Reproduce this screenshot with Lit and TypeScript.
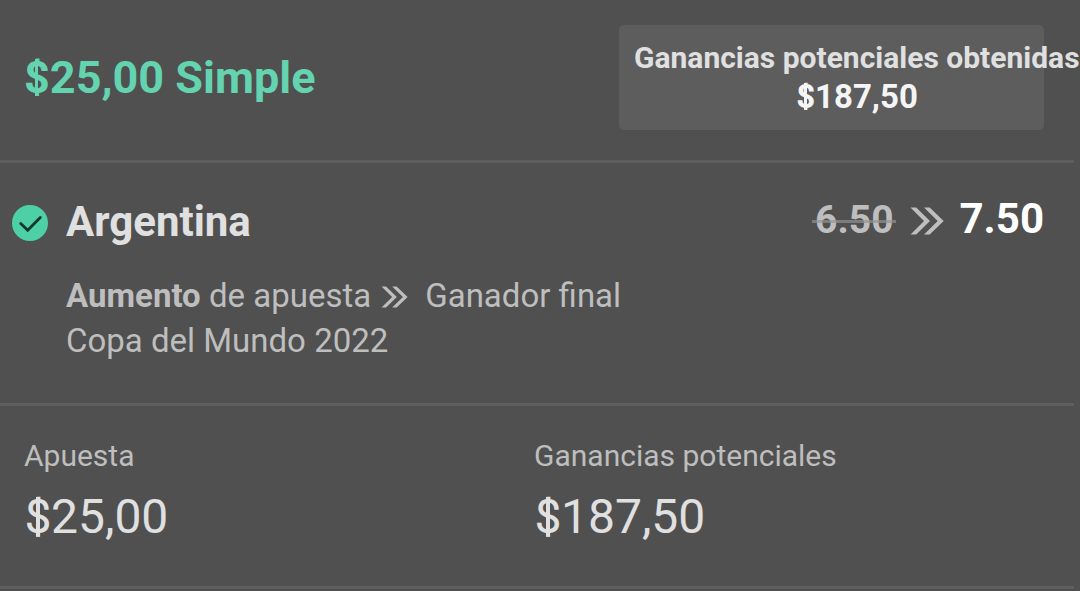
import { LitElement, html, css } from "lit";
import { customElement } from "lit/decorators.js";

@customElement("app-root")
export class AppRoot extends LitElement {
  static styles = css`
    :host { display: block; width: 1080px; height: 591px; overflow: hidden; background: #505050; font-family: Roboto, sans-serif; color: #e0e0e0; }
    * { box-sizing: border-box; }
    .head { height: 163px; width: 1074px; border-bottom: 3px solid #5e5e5e; display: flex; justify-content: space-between; padding: 25px 30px 0 24px; white-space: nowrap; }
    .title { font-size: 45px; font-weight: 700; line-height: 52px; color: #63d3b0; padding-top: 27px; }
    .pill { width: 425px; height: 105px; border-radius: 5px; background: #5d5d5d; padding: 14px 0 0 15px; font-weight: 700; }
    .pill .label { font-size: 30px; line-height: 38px; }
    .pill .sum { width: 446px; text-align: center; font-size: 33px; line-height: 40px; color: #f5f5f5; }
    /* Currency sign with short stems and a bar through the middle */
    .cur { display: inline-block; position: relative; line-height: 1; clip-path: inset(0.08em 0 0.09em 0); }
    .cur::after { content: ""; position: absolute; left: calc(50% - 0.045em); top: 0.08em; bottom: 0.09em; width: 0.08em; background: currentColor; }
    .bet { height: 243px; width: 1074px; border-bottom: 3px solid #5e5e5e; padding: 34px 30px 0 12px; white-space: nowrap; }
    .row { display: flex; align-items: flex-start; height: 48px; }
    .check { width: 36px; height: 36px; margin: 8px 18px 0 0; display: block; }
    .name { font-size: 42px; font-weight: 700; line-height: 50px; flex: 1; }
    .old { position: relative; font-size: 39px; font-weight: 700; line-height: 46px; color: #bebebe; padding: 0 3px; }
    .old::after { content: ""; position: absolute; left: 0; right: 1px; top: 23px; height: 3px; background: rgba(148, 148, 148, 0.68); }
    .chev { display: block; width: 34px; height: 28px; margin: 10px 16px 0 13px; }
    .now { font-size: 42px; font-weight: 700; line-height: 44px; color: #fff; }
    .detail { padding: 28px 0 0 54px; font-size: 33px; line-height: 45px; color: #bebebe; }
    .line { display: flex; align-items: center; }
    .line b { white-space: pre; }
    .small { display: block; width: 27px; height: 22px; margin: 2px 17px 0 10px; }
    .foot { height: 183px; width: 1074px; border-bottom: 3px solid #5e5e5e; display: grid; grid-template-columns: 510px 1fr; padding: 32px 0 0 24px; }
    .cap { font-size: 30px; line-height: 36px; color: #bebebe; }
    .amt { font-size: 48px; line-height: 56px; margin-top: 15px; }
    .amt .cur { margin: 0 -0.01em 0 0.01em; }
  `;

  private chevrons(cls: string) {
    return html`<svg class=${cls} viewBox="0 0 34 28" fill="#bebebe"><path d="M.5 .5H6.200L20 14 6.200 27.500H.5L14 14ZM14 .5H19.700L33.700 14 19.700 27.500H14L27.700 14Z"/></svg>`;
  }

  private money(value: string) {
    return html`<span class="cur">$</span>${value}`;
  }

  render() {
    return html`
      <div class="head">
        <div class="title">${this.money("25,00")} Simple</div>
        <div class="pill"><div class="label">Ganancias potenciales obtenidas</div><div class="sum">${this.money("187,50")}</div></div>
      </div>
      <div class="bet">
        <div class="row">
          <svg class="check" viewBox="0 0 36 36"><circle cx="18" cy="18" r="18" fill="#4dd0a6"/><path d="M8.700 18.500l7 6.700L28.300 12.500" fill="none" stroke="#12382b" stroke-width="2.800" stroke-linecap="round"/></svg>
          <div class="name">Argentina</div>
          <div class="old">6.50</div>${this.chevrons("chev")}<div class="now">7.50</div>
        </div>
        <div class="detail">
          <div class="line"><b>Aumento </b>de apuesta${this.chevrons("small")}Ganador final</div>
          <div>Copa del Mundo 2022</div>
        </div>
      </div>
      <div class="foot">
        <div><div class="cap">Apuesta</div><div class="amt">${this.money("25,00")}</div></div>
        <div><div class="cap">Ganancias potenciales</div><div class="amt">${this.money("187,50")}</div></div>
      </div>`;
  }
}
